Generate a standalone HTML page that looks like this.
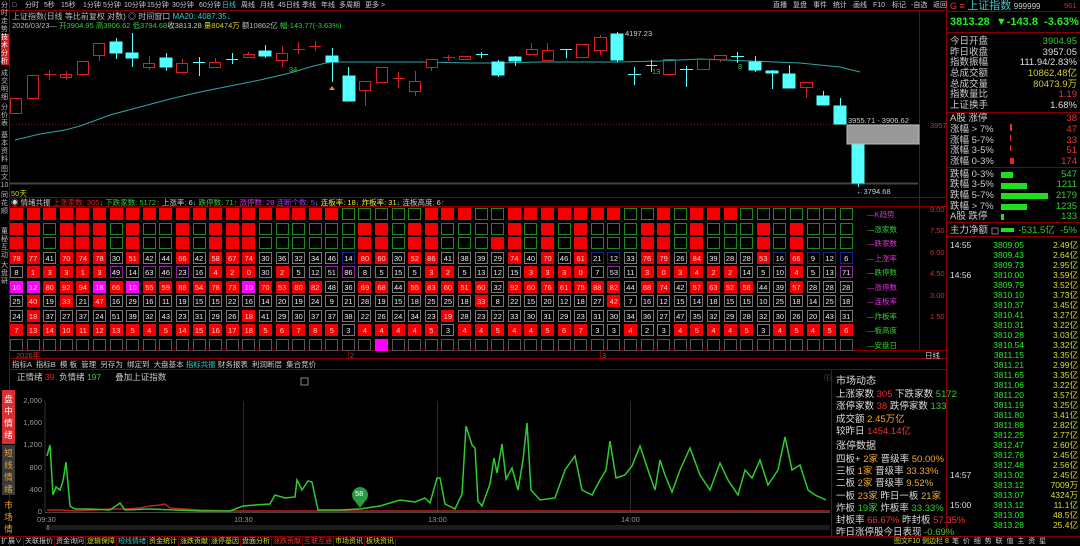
<!DOCTYPE html>
<html><head><meta charset="utf-8">
<style>
*{margin:0;padding:0;box-sizing:border-box}
body{width:1080px;height:546px;background:#000;overflow:hidden;position:relative;font-family:"Liberation Sans","Noto Sans CJK SC",sans-serif;font-size:9px;color:#ccc}
.a{position:absolute;white-space:nowrap;line-height:1}
svg{position:absolute;left:0;top:0}
.grid{position:absolute;left:10px;top:208px;display:grid;grid-template-columns:repeat(51,16.6px);grid-auto-rows:14.55px}
.grid b{display:block;width:13px;height:12px;font-weight:normal;font-size:7.5px;line-height:11px;text-align:center;color:#eee;border:1px solid #777}
.grid b.r{background:#f40000;border-color:#f40000;color:#fcc}
.grid b.g{border-color:#1c8a1c}
.grid b.p{background:#f0f;border-color:#f0f;color:#fdf}
.grid b.b{border-color:#23238a}
.grid b.v{border-color:#8a2a9a}
.grid b.e{border-color:#555}
.side{position:absolute;left:0;width:9px;font-size:7px;line-height:8px;text-align:center;color:#bbb}
.rp div{position:absolute;left:950px;right:3px;height:11px;font-size:9.5px;line-height:11px}
.rp span{float:right}
.mi{position:absolute;left:836px;font-size:9.5px;line-height:10px;color:#ddd;white-space:nowrap}
.bt{position:absolute;top:537px;height:9px;font-size:7px;line-height:9px;border-right:1px solid #700;padding:0 1px;white-space:nowrap}
.vt{position:absolute;left:2px;width:13px;font-size:8.5px;line-height:12px;text-align:center}
.tb span{position:absolute}
</style></head><body>

<svg width="1080" height="546">
<g stroke="#8a0000" fill="none" stroke-width="1">
<line x1="9.5" y1="0" x2="9.5" y2="546"/>
<line x1="0" y1="10.5" x2="946" y2="10.5"/>
<line x1="946.5" y1="0" x2="946.5" y2="537"/>
<line x1="10" y1="197.5" x2="946" y2="197.5"/>
<line x1="10" y1="206.5" x2="946" y2="206.5"/>
<line x1="919.5" y1="11" x2="919.5" y2="350"/>
<line x1="10" y1="350.5" x2="946" y2="350.5"/>
<line x1="10" y1="358.5" x2="946" y2="358.5"/>
<line x1="10" y1="369.5" x2="946" y2="369.5"/>
<line x1="831.5" y1="370" x2="831.5" y2="537"/>
<line x1="0" y1="536.5" x2="1080" y2="536.5"/>
<line x1="947" y1="11.5" x2="1080" y2="11.5"/>
<line x1="947" y1="32.5" x2="1080" y2="32.5"/>
<line x1="947" y1="112.5" x2="1080" y2="112.5"/>
<line x1="947" y1="167.5" x2="1080" y2="167.5"/>
<line x1="947" y1="222.5" x2="1080" y2="222.5"/>
<line x1="947" y1="236.5" x2="1080" y2="236.5"/>
<line x1="348.5" y1="351" x2="348.5" y2="358"/>
<line x1="600.5" y1="351" x2="600.5" y2="358"/>
</g>
<line x1="10" y1="124.5" x2="918" y2="124.5" stroke="#6a2020" stroke-dasharray="1,2"/>
<line x1="10" y1="183.5" x2="918" y2="183.5" stroke="#444" stroke-width="2"/>
<polyline fill="none" stroke="#2aa8a8" stroke-width="1" points="15,140 40,134 65,130 80,126 110,115 140,107 170,99 200,92 230,86 260,80 290,73 310,67 330,62 360,62 420,62 470,63 500,63 540,62 620,62 660,61 700,59 750,61 800,63 840,67 860,72"/>
<g stroke="#d82020" fill="none">
<rect x="10.5" y="98.5" width="11" height="15"/>
<rect x="27.5" y="75.5" width="11" height="23"/><line x1="33" y1="98" x2="33" y2="100"/>
<line x1="49.5" y1="70" x2="49.5" y2="80"/><line x1="44" y1="74.5" x2="56" y2="74.5"/>
<line x1="66.5" y1="71" x2="66.5" y2="80"/><rect x="60.5" y="74.5" width="11" height="3"/>
<rect x="77.5" y="61.5" width="11" height="13"/>
<line x1="99.5" y1="43" x2="99.5" y2="61"/><rect x="93.5" y="43.5" width="11" height="12" fill="#000"/>
<line x1="149.5" y1="56" x2="149.5" y2="70"/><rect x="143.5" y="63.5" width="11" height="4" fill="#000"/>
<line x1="182.5" y1="59" x2="182.5" y2="63"/><rect x="176.5" y="63.5" width="11" height="9" fill="#000"/>
<line x1="215.5" y1="58" x2="215.5" y2="68"/><rect x="209.5" y="62.5" width="11" height="5" fill="#000"/>
<line x1="248.5" y1="52" x2="248.5" y2="58"/><rect x="243.5" y="54.5" width="11" height="3" fill="#000"/>
<line x1="282.5" y1="46" x2="282.5" y2="67"/><rect x="276.5" y="53.5" width="11" height="7" fill="#000"/>
<line x1="298.5" y1="42" x2="298.5" y2="54"/><line x1="293" y1="49.5" x2="305" y2="49.5"/>
<line x1="315.5" y1="41" x2="315.5" y2="51"/><line x1="309" y1="46.5" x2="321" y2="46.5"/>
<line x1="365.5" y1="81" x2="365.5" y2="106"/><rect x="359.5" y="81.5" width="11" height="9" fill="#000"/>
<rect x="376.5" y="67.5" width="11" height="15"/>
<line x1="398.5" y1="72" x2="398.5" y2="88"/><line x1="393" y1="78.5" x2="405" y2="78.5"/>
<line x1="415.5" y1="71" x2="415.5" y2="96"/><rect x="409.5" y="81.5" width="11" height="10" fill="#000"/>
<line x1="431.5" y1="59" x2="431.5" y2="71"/><rect x="426.5" y="59.5" width="11" height="8" fill="#000"/>
<line x1="448.5" y1="55" x2="448.5" y2="61"/><line x1="443" y1="57.5" x2="455" y2="57.5"/>
<rect x="459.5" y="56.5" width="11" height="3"/>
<line x1="531.5" y1="43" x2="531.5" y2="55"/><rect x="526.5" y="49.5" width="11" height="5" fill="#000"/>
<line x1="547.5" y1="43" x2="547.5" y2="50"/><rect x="542.5" y="50.5" width="11" height="10" fill="#000"/>
<rect x="576.5" y="44.5" width="12" height="13"/>
<line x1="600.5" y1="35" x2="600.5" y2="55"/><rect x="594.5" y="37.5" width="12" height="13" fill="#000"/>
<rect x="663.5" y="59.5" width="12" height="15"/>
<rect x="697.5" y="59.5" width="12" height="10"/>
<line x1="720.5" y1="55" x2="720.5" y2="62"/><rect x="714.5" y="55.5" width="12" height="4" fill="#000"/>
<line x1="806.5" y1="82" x2="806.5" y2="98"/><rect x="800.5" y="82.5" width="12" height="5" fill="#000"/>
</g>
<g stroke="#5ff" fill="#5ff">
<line x1="116.5" y1="38" x2="116.5" y2="59"/><rect x="110" y="42" width="12" height="11"/>
<line x1="132.5" y1="33" x2="132.5" y2="67"/><rect x="126" y="53" width="12" height="5"/>
<line x1="166.5" y1="53" x2="166.5" y2="71"/><rect x="160" y="58" width="12" height="9"/>
<line x1="199.5" y1="57" x2="199.5" y2="76"/><line x1="193" y1="62.5" x2="205" y2="62.5"/>
<line x1="232.5" y1="53" x2="232.5" y2="64"/><line x1="226" y1="59.5" x2="238" y2="59.5"/>
<line x1="265.5" y1="45" x2="265.5" y2="58"/><rect x="259" y="51" width="12" height="5"/>
<line x1="332.5" y1="48" x2="332.5" y2="82"/><rect x="326" y="56" width="12" height="6"/>
<line x1="348.5" y1="67" x2="348.5" y2="101"/><rect x="343" y="76" width="12" height="25"/>
<line x1="481.5" y1="52" x2="481.5" y2="58"/><line x1="476" y1="54.5" x2="488" y2="54.5"/>
<line x1="498.5" y1="60" x2="498.5" y2="77"/><rect x="492" y="62" width="12" height="13"/>
<line x1="515.5" y1="56" x2="515.5" y2="66"/><rect x="509" y="57" width="12" height="4"/>
<line x1="566.5" y1="49" x2="566.5" y2="58"/><line x1="560" y1="49.5" x2="572" y2="49.5"/>
<line x1="617.5" y1="32" x2="617.5" y2="62"/><rect x="611" y="34" width="12" height="26"/>
<line x1="634.5" y1="67" x2="634.5" y2="85"/><line x1="628" y1="74.5" x2="641" y2="74.5"/>
<line x1="651.5" y1="60" x2="651.5" y2="72"/><line x1="646" y1="65.5" x2="657" y2="65.5"/>
<line x1="686.5" y1="66" x2="686.5" y2="87"/><line x1="680" y1="69.5" x2="693" y2="69.5"/>
<line x1="737.5" y1="52" x2="737.5" y2="63"/><line x1="731" y1="56.5" x2="744" y2="56.5"/>
<line x1="755.5" y1="56" x2="755.5" y2="72"/><rect x="749" y="62" width="12" height="8"/>
<line x1="772.5" y1="70" x2="772.5" y2="89"/><rect x="766" y="71" width="12" height="2"/>
<line x1="789.5" y1="65" x2="789.5" y2="88"/><rect x="783" y="74" width="12" height="14"/>
<line x1="823.5" y1="91" x2="823.5" y2="105"/><rect x="817" y="96" width="12" height="9"/>
<line x1="840.5" y1="98" x2="840.5" y2="124"/><rect x="834" y="106" width="12" height="18"/>
<line x1="858.5" y1="145" x2="858.5" y2="187"/><rect x="852" y="145" width="12" height="38"/>
</g>
<rect x="847" y="125" width="72" height="19" fill="#999" stroke="#bbb"/>
<path d="M329 90 l3 -4 l3 4z" fill="#e9823a"/>
<g stroke="#2a2a2a"><line x1="243.5" y1="401" x2="243.5" y2="512"/><line x1="437.5" y1="401" x2="437.5" y2="512"/><line x1="630.5" y1="401" x2="630.5" y2="512"/></g>
<line x1="45" y1="401" x2="45" y2="513" stroke="#333"/>
<line x1="45" y1="512.5" x2="830" y2="512.5" stroke="#444"/>
<polyline fill="none" stroke="#c02020" stroke-width="1.5" points="47,510 60,510 75,511 95,510 110,509 125,509 140,508 150,506 160,505 165,504 170,508 185,509 200,510 230,511 830,511"/>
<polyline fill="none" stroke="#2ecc2e" stroke-width="1.5" points="47,456 50,445 53,495 56,487 60,490 63,481 66,462 70,506 75,509 90,509 110,510 120,503 125,510 150,509 200,511 230,511 243,506 255,505 270,504 275,495 285,498 295,497 297,480 302,490 308,481 312,482 318,510 340,510 360,509 380,506 400,500 415,502 425,498 430,503 437,478 440,478 445,504 455,509 462,494 466,426 472,445 475,448 478,501 482,506 490,484 494,458 497,473 502,444 506,479 512,468 518,490 523,460 527,423 531,490 540,500 555,498 565,470 575,456 582,490 592,495 600,480 606,470 610,441 616,478 625,475 632,466 640,446 648,470 655,490 660,460 665,475 672,492 680,470 690,448 700,475 710,490 720,463 728,480 738,495 745,470 752,478 760,460 768,485 778,470 785,437 792,470 800,465 808,490 815,495 826,500"/>
<rect x="45" y="525" width="785" height="5" fill="#1c1c1c"/>
<rect x="47" y="525" width="2" height="5" fill="#555"/>
<path d="M360 503 a8 8 0 1 1 0.1 0 z" fill="#2a9a44"/>
<path d="M354 500 l6 8 l6 -8z" fill="#2a9a44"/>
<rect x="1010" y="124" width="2" height="7" fill="#d33"/><rect x="1010" y="135" width="1" height="6" fill="#d33"/><rect x="1010" y="145" width="1" height="6" fill="#d33"/><rect x="1010" y="158" width="4" height="6" fill="#e22"/>
<g fill="#1ee01e"><rect x="1001" y="172" width="12" height="6"/><rect x="1001" y="183" width="26" height="6"/><rect x="1001" y="193" width="47" height="6"/><rect x="1001" y="204" width="26" height="6"/><rect x="1001" y="214" width="3" height="6"/><rect x="1001" y="228" width="13" height="4"/></g>
<rect x="992" y="228" width="6" height="6" fill="none" stroke="#777"/>
<rect x="1" y="34" width="8" height="31" fill="#c81e1e"/>
<rect x="2" y="390" width="13" height="54" fill="#d83030"/>
<rect x="2" y="445" width="13" height="50" fill="#3a3a3a"/>
<rect x="301" y="378" width="7" height="7" fill="none" stroke="#888"/>
</svg>

<div class="a tb" style="left:12px;top:2px;font-size:7px;color:#ccc">
<span style="left:0">□</span><span style="left:13px">分时</span><span style="left:32px">5秒</span><span style="left:49px">15秒</span><span style="left:71px">1分钟</span><span style="left:91px">5分钟</span><span style="left:112px">10分钟</span><span style="left:135px">15分钟</span><span style="left:160px">30分钟</span><span style="left:187px">60分钟</span><span style="left:210px;color:#3cc">日线</span><span style="left:229px">周线</span><span style="left:248px">月线</span><span style="left:266px">45日线</span><span style="left:290px">季线</span><span style="left:309px">年线</span><span style="left:327px">多周期</span><span style="left:353px">更多 &gt;</span>
</div>
<div class="a tb" style="left:773px;top:2px;font-size:7px;color:#ccc"><span style="left:0">直播</span><span style="left:20px">复盘</span><span style="left:40px">事件</span><span style="left:60px">统计</span><span style="left:80px">画线</span><span style="left:100px">F10</span><span style="left:119px">标记</span><span style="left:138px">-自选</span><span style="left:160px">返回</span></div>

<div class="a" style="left:12px;top:13px;font-size:8px;color:#bbb">上证指数(日线 等比前复权 对数) ◎ 时间窗口 <span style="color:#3cc">MA20: 4087.35↓</span></div>
<div class="a" style="left:12px;top:22px;font-size:7.5px;color:#bbb">2026/03/23— <span style="color:#3c3">开3904.95</span> <span style="color:#3c3">高3906.62</span> <span style="color:#3c3">低3794.68</span><span style="color:#ccc">收3813.28</span> <span style="color:#cc3">量80474万</span> <span style="color:#bbb">额10862亿</span> <span style="color:#3c3">幅-143.77(-3.63%)</span></div>
<div class="a" style="left:625px;top:30px;font-size:7.5px;color:#ccc">4197.23</div>
<div class="a" style="left:289px;top:66px;font-size:7.5px;color:#3c3">34</div>
<div class="a" style="left:652px;top:68px;font-size:7.5px;color:#3c3">13</div>
<div class="a" style="left:738px;top:63px;font-size:7.5px;color:#3c3">8</div>
<div class="a" style="left:848px;top:117px;font-size:7.5px;color:#ccc">3955.71 - 3906.62</div>
<div class="a" style="left:856px;top:188px;font-size:7.5px;color:#ccc">←3794.68</div>
<div class="a" style="left:930px;top:122px;font-size:7.5px;color:#c33">3957</div>
<div class="a" style="left:11px;top:190px;font-size:7.5px;color:#cc3">50天</div>
<div class="a" style="left:11px;top:199px;font-size:7.5px;color:#ccc">◉ 情绪共振 <span style="color:#d22">上涨家数: 305</span><span style="color:#3cf">↓</span> <span style="color:#3c3">下跌家数: 5172</span><span style="color:#f33">↑</span> <span style="color:#ccc">上涨率: 6</span><span style="color:#3cf">↓</span> <span style="color:#3c3">跌停数: 71</span><span style="color:#f33">↑</span> <span style="color:#d3d">涨停数: 28</span> <span style="color:#a3f">连断个数: 5</span><span style="color:#3cf">↓</span> <span style="color:#ee3">连板率: 18</span><span style="color:#3cf">↓</span> <span style="color:#ee3">炸板率: 31</span><span style="color:#3cf">↓</span> <span style="color:#ccc">连板高度: 6</span><span style="color:#f33">↑</span></div>

<div class="side" style="top:2px">分<br>时<br>走<br>势</div>
<div class="side" style="top:34px;color:#fff">技<br>术<br>分<br>析</div>
<div class="side" style="top:70px">成<br>交<br>明<br>细</div>
<div class="side" style="top:104px">分<br>价<br>表</div>
<div class="side" style="top:132px">基<br>本<br>资<br>料</div>
<div class="side" style="top:166px">图<br>文<br>10</div>
<div class="side" style="top:192px">同<br>花<br>顺</div>
<div class="side" style="top:228px">董<br>秘<br>互<br>动</div>
<div class="side" style="top:262px">大<br>盘<br>研</div>

<div class="grid">
<b class=r></b><b class=r></b><b class=r></b><b class=r></b><b class=r></b><b class=r></b><b class=r></b><b class=r></b><b class=r></b><b class=r></b><b class=r></b><b class=r></b><b class=r></b><b class=r></b><b class=r></b><b class=r></b><b class=r></b><b class=r></b><b class=r></b><b class=r></b><b class=g></b><b class=g></b><b class=g></b><b class=g></b><b class=g></b><b class=r></b><b class=r></b><b class=r></b><b class=g></b><b class=g></b><b class=r></b><b class=r></b><b class=r></b><b class=r></b><b class=r></b><b class=r></b><b class=r></b><b class=g></b><b class=g></b><b class=r></b><b class=g></b><b class=r></b><b class=r></b><b class=r></b><b class=g></b><b class=g></b><b class=g></b><b class=g></b><b class=g></b><b class=g></b><b class=g></b>
<b class=r></b><b class=r></b><b class=g></b><b class=r></b><b class=r></b><b class=r></b><b class=g></b><b class=r></b><b class=g></b><b class=g></b><b class=r></b><b class=g></b><b class=r></b><b class=r></b><b class=r></b><b class=g></b><b class=g></b><b class=g></b><b class=g></b><b class=g></b><b class=g></b><b class=r></b><b class=r></b><b class=g></b><b class=r></b><b class=r></b><b class=g></b><b class=g></b><b class=g></b><b class=g></b><b class=r></b><b class=g></b><b class=r></b><b class=g></b><b class=r></b><b class=g></b><b class=g></b><b class=g></b><b class=r></b><b class=r></b><b class=g></b><b class=r></b><b class=g></b><b class=g></b><b class=g></b><b class=r></b><b class=g></b><b class=r></b><b class=g></b><b class=g></b><b class=g></b>
<b class=r></b><b class=r></b><b class=g></b><b class=r></b><b class=r></b><b class=r></b><b class=g></b><b class=r></b><b class=g></b><b class=g></b><b class=r></b><b class=g></b><b class=r></b><b class=r></b><b class=r></b><b class=g></b><b class=g></b><b class=g></b><b class=g></b><b class=g></b><b class=g></b><b class=r></b><b class=r></b><b class=g></b><b class=r></b><b class=r></b><b class=g></b><b class=g></b><b class=g></b><b class=r></b><b class=r></b><b class=g></b><b class=r></b><b class=g></b><b class=r></b><b class=g></b><b class=g></b><b class=g></b><b class=r></b><b class=r></b><b class=g></b><b class=r></b><b class=g></b><b class=g></b><b class=g></b><b class=r></b><b class=g></b><b class=r></b><b class=g></b><b class=g></b><b class=g></b>
<b class=r>78</b><b class=r>77</b><b>41</b><b class=r>70</b><b class=r>74</b><b class=r>78</b><b>30</b><b class=r>51</b><b>42</b><b>44</b><b class=r>66</b><b>42</b><b class=r>58</b><b class=r>67</b><b class=r>74</b><b>30</b><b>36</b><b>32</b><b>34</b><b>46</b><b class=b>14</b><b class=r>80</b><b class=r>60</b><b>30</b><b class=r>52</b><b class=r>86</b><b>41</b><b>38</b><b>39</b><b>29</b><b class=r>74</b><b>40</b><b class=r>70</b><b>46</b><b class=r>61</b><b class=b>21</b><b class=b>12</b><b>33</b><b class=r>76</b><b class=r>79</b><b>26</b><b class=r>84</b><b>39</b><b>28</b><b>28</b><b class=r>53</b><b class=b>16</b><b class=r>66</b><b class=b>9</b><b class=b>12</b><b class=b>6</b>
<b>8</b><b class=r>1</b><b class=r>3</b><b class=r>3</b><b class=r>1</b><b class=r>3</b><b class=v>49</b><b>14</b><b class=v>63</b><b class=v>46</b><b class=v>23</b><b>16</b><b class=r>4</b><b class=r>2</b><b class=r>0</b><b>30</b><b class=r>2</b><b>5</b><b>12</b><b class=v>51</b><b class=v>86</b><b>8</b><b>5</b><b>15</b><b>5</b><b class=r>3</b><b class=r>2</b><b>5</b><b>13</b><b>12</b><b>15</b><b class=r>3</b><b class=r>3</b><b class=r>3</b><b class=r>0</b><b>7</b><b class=v>53</b><b>11</b><b class=r>3</b><b class=r>0</b><b class=r>3</b><b class=r>4</b><b class=r>2</b><b class=r>2</b><b>14</b><b>5</b><b>10</b><b class=r>4</b><b>5</b><b>13</b><b class=v>71</b>
<b class=p>10</b><b class=p>12</b><b class=r>80</b><b class=r>92</b><b class=r>94</b><b class=p>18</b><b class=r>66</b><b class=p>10</b><b class=r>55</b><b class=r>59</b><b class=r>88</b><b class=r>54</b><b class=r>78</b><b class=r>73</b><b class=p>10</b><b class=r>70</b><b class=r>53</b><b class=r>80</b><b class=r>82</b><b>48</b><b>36</b><b class=r>69</b><b class=r>68</b><b>44</b><b class=r>55</b><b class=r>83</b><b class=r>60</b><b class=r>51</b><b class=r>60</b><b>32</b><b class=r>92</b><b class=r>60</b><b class=r>76</b><b class=r>61</b><b class=r>75</b><b class=r>88</b><b class=r>82</b><b>44</b><b class=r>68</b><b class=r>74</b><b>42</b><b class=r>57</b><b class=r>63</b><b class=r>52</b><b class=r>58</b><b>44</b><b>39</b><b class=r>57</b><b>28</b><b>28</b><b>28</b>
<b>25</b><b class=r>40</b><b>19</b><b class=r>33</b><b>21</b><b class=r>47</b><b>16</b><b>29</b><b>16</b><b>11</b><b>19</b><b>15</b><b>15</b><b>22</b><b>16</b><b>14</b><b>20</b><b>19</b><b>24</b><b>9</b><b>21</b><b>28</b><b>19</b><b>15</b><b>18</b><b>25</b><b>25</b><b>18</b><b class=r>33</b><b>8</b><b>22</b><b>15</b><b>20</b><b>12</b><b>18</b><b>27</b><b class=r>42</b><b>7</b><b>16</b><b>12</b><b>15</b><b>14</b><b>18</b><b>15</b><b>15</b><b>10</b><b>25</b><b>18</b><b>14</b><b>25</b><b>18</b>
<b>24</b><b class=r>18</b><b>37</b><b>27</b><b>37</b><b>24</b><b>51</b><b>39</b><b>32</b><b>43</b><b>23</b><b>31</b><b>29</b><b>26</b><b class=r>18</b><b>41</b><b>29</b><b>30</b><b>37</b><b>37</b><b>38</b><b>22</b><b>26</b><b>24</b><b>34</b><b>23</b><b class=r>19</b><b>28</b><b>23</b><b>22</b><b>33</b><b>30</b><b>31</b><b>29</b><b>23</b><b>31</b><b>30</b><b>34</b><b>36</b><b>27</b><b>47</b><b>35</b><b>32</b><b>29</b><b>28</b><b>32</b><b>30</b><b>26</b><b>20</b><b>43</b><b>31</b>
<b class=r>7</b><b class=r>13</b><b class=r>14</b><b class=r>10</b><b class=r>11</b><b class=r>12</b><b class=r>13</b><b class=r>5</b><b class=r>4</b><b class=r>5</b><b class=r>14</b><b class=r>15</b><b class=r>16</b><b class=r>17</b><b class=r>18</b><b class=r>5</b><b class=r>6</b><b class=r>7</b><b class=r>8</b><b class=r>5</b><b>3</b><b class=r>4</b><b class=r>4</b><b class=r>4</b><b class=r>4</b><b class=r>5</b><b>3</b><b class=r>4</b><b class=r>4</b><b class=r>5</b><b class=r>4</b><b class=r>4</b><b class=r>5</b><b class=r>6</b><b class=r>7</b><b>3</b><b>3</b><b class=r>4</b><b>2</b><b>3</b><b class=r>4</b><b class=r>5</b><b class=r>4</b><b class=r>4</b><b class=r>5</b><b>3</b><b class=r>4</b><b class=r>5</b><b class=r>4</b><b class=r>5</b><b class=r>6</b>
<b class=e></b><b class=e></b><b class=e></b><b class=e></b><b class=e></b><b class=e></b><b class=e></b><b class=e></b><b class=e></b><b class=e></b><b class=e></b><b class=e></b><b class=e></b><b class=e></b><b class=e></b><b class=e></b><b class=e></b><b class=e></b><b class=e></b><b class=e></b><b class=e></b><b class=e></b><b class=p></b><b class=e></b><b class=e></b><b class=e></b><b class=e></b><b class=e></b><b class=e></b><b class=e></b><b class=e></b><b class=e></b><b class=e></b><b class=e></b><b class=e></b><b class=e></b><b class=e></b><b class=e></b><b class=e></b><b class=e></b><b class=e></b><b class=e></b><b class=e></b><b class=e></b><b class=e></b><b class=e></b><b class=e></b><b class=e></b><b class=e></b><b class=e></b><b class=e></b>
</div>

<div class="a" style="left:867px;top:208px;font-size:7.5px;line-height:14.55px;white-space:normal;width:50px">
<div style="color:#d3d">—K趋势</div><div style="color:#3c3">—涨家数</div><div style="color:#d3d">—跌家数</div><div style="color:#d3d">—上涨率</div><div style="color:#3c3">—跌停数</div><div style="color:#d3d">—涨停数</div><div style="color:#d3d">—连板率</div><div style="color:#3c3">—炸板率</div><div style="color:#3c3">—板高度</div><div style="color:#3c3">—安盘日</div>
</div>
<div class="a" style="left:930px;top:199px;font-size:7.5px;line-height:21.4px;color:#c33;white-space:normal"><div>9.00</div><div>7.50</div><div>6.00</div><div>4.50</div><div>3.00</div><div>1.50</div></div>
<div class="a" style="left:16px;top:352px;font-size:7.5px;color:#c33">2026年</div>
<div class="a" style="left:350px;top:352px;font-size:7.5px;color:#c33">2</div>
<div class="a" style="left:602px;top:352px;font-size:7.5px;color:#c33">3</div>
<div class="a" style="left:925px;top:352px;font-size:7.5px;color:#ccc">日线</div>
<div class="a" style="left:12px;top:361px;font-size:7.5px;color:#ccc">指标A &nbsp;指标B &nbsp;模 板 &nbsp;管理 &nbsp;另存为 &nbsp;绑定到 &nbsp;大盘基本 <span style="color:#3cc">指标共振</span> 财务报表 &nbsp;利润断层 &nbsp;集合竞价</div>

<div class="a" style="left:17px;top:373px;font-size:8.5px;color:#ccc">正情绪 <span style="color:#d22">39</span> &nbsp;负情绪 <span style="color:#3c3">197</span> &nbsp; &nbsp;&nbsp; 叠加上证指数</div>
<div class="vt" style="top:393px;color:#fff">盘<br>中<br>情<br>绪</div>
<div class="vt" style="top:447px;color:#e9a030">短<br>线<br>情<br>绪</div>
<div class="vt" style="top:499px;color:#e9a030">市<br>场<br>情</div>
<div class="a" style="left:18px;top:390px;font-size:7.5px;line-height:22.2px;color:#999;white-space:normal;text-align:right;width:24px"><div>2,000</div><div>1,600</div><div>1,200</div><div>800</div><div>400</div><div>0</div></div>
<div class="a" style="top:516px;left:37px;font-size:7.5px;color:#999">09:30</div>
<div class="a" style="top:516px;left:234px;font-size:7.5px;color:#999">10:30</div>
<div class="a" style="top:516px;left:428px;font-size:7.5px;color:#999">13:00</div>
<div class="a" style="top:516px;left:621px;font-size:7.5px;color:#999">14:00</div>
<div class="a" style="top:490px;left:355px;font-size:7.5px;color:#fff">58</div>
<div class="a" style="top:375px;left:824px;font-size:7px;color:#888">ⓘ</div>

<div class="mi" style="top:377px;font-size:10px">市场动态</div>
<div class="mi" style="top:390px">上涨家数 <span style="color:#e33">305</span> 下跌家数 <span style="color:#3c3">5172</span></div>
<div class="mi" style="top:402px">涨停家数 <span style="color:#e33">38</span> 跌停家数 <span style="color:#3c3">133</span></div>
<div class="mi" style="top:415px">成交额 <span style="color:#ea3">2.45万亿</span></div>
<div class="mi" style="top:427px">较昨日 <span style="color:#e33">1454.14亿</span></div>
<div class="mi" style="top:442px;font-size:10px">涨停数据</div>
<div class="mi" style="top:455px">四板+ <span style="color:#ea3">2家</span> 晋级率 <span style="color:#ea3">50.00%</span></div>
<div class="mi" style="top:467px">三板 <span style="color:#ea3">1家</span> 晋级率 <span style="color:#ea3">33.33%</span></div>
<div class="mi" style="top:479px">二板 <span style="color:#ea3">2家</span> 晋级率 <span style="color:#ea3">9.52%</span></div>
<div class="mi" style="top:492px">一板 <span style="color:#ea3">23家</span> 昨日一板 <span style="color:#ea3">21家</span></div>
<div class="mi" style="top:504px">炸板 <span style="color:#3c3">19家</span> 炸板率 <span style="color:#3c3">33.33%</span></div>
<div class="mi" style="top:516px">封板率 <span style="color:#e33">66.67%</span> 昨封板 <span style="color:#e33">57.35%</span></div>
<div class="mi" style="top:528px">昨日涨停股今日表现 <span style="color:#3c3">-0.69%</span></div>

<div class="a" style="left:950px;top:1px;font-size:9px;color:#e33">G ≡ <span style="color:#3cc;font-size:11px">上证指数</span> <span style="color:#ccc;font-size:8px">999999</span></div>
<div class="a" style="left:1064px;top:2px;font-size:7.5px;color:#c33">961</div>
<div class="a" style="left:950px;top:17px;font-size:11px;font-weight:bold;color:#2e2">3813.28 &nbsp;▼-143.8 &nbsp;-3.63%</div>
<div class="rp">
<div style="top:36px">今日开盘<span style="color:#3c3">3904.95</span></div>
<div style="top:47px">昨日收盘<span style="color:#ddd">3957.05</span></div>
<div style="top:57px">指数振幅<span style="color:#ddd">111.94/2.83%</span></div>
<div style="top:68px">总成交额<span style="color:#cc3">10862.48亿</span></div>
<div style="top:79px">总成交量<span style="color:#cc3">80473.9万</span></div>
<div style="top:89px">指数量比<span style="color:#e33">1.19</span></div>
<div style="top:100px">上证换手<span style="color:#ddd">1.68%</span></div>
<div style="top:113px">A股 涨停<span style="color:#e33">38</span></div>
<div style="top:124px">涨幅 &gt; 7%<span style="color:#e33">47</span></div>
<div style="top:135px">涨幅 5-7%<span style="color:#e33">33</span></div>
<div style="top:145px">涨幅 3-5%<span style="color:#e33">51</span></div>
<div style="top:156px">涨幅 0-3%<span style="color:#e33">174</span></div>
<div style="top:169px">跌幅 0-3%<span style="color:#3c3">547</span></div>
<div style="top:179px">跌幅 3-5%<span style="color:#3c3">1211</span></div>
<div style="top:190px">跌幅 5-7%<span style="color:#3c3">2179</span></div>
<div style="top:201px">跌幅 &gt; 7%<span style="color:#3c3">1235</span></div>
<div style="top:211px">A股 跌停<span style="color:#3c3">133</span></div>
<div style="top:225px">主力净额<span style="color:#3c3">-531.5亿 &nbsp;-5%</span></div>
</div>

<div class="a" style="left:950px;top:240px;font-size:8.5px;line-height:10px;color:#ddd;white-space:normal"><div>14:55</div><div>&nbsp;</div><div>&nbsp;</div><div>14:56</div><div style="height:190px"></div><div>14:57</div><div>&nbsp;</div><div>&nbsp;</div><div>15:00</div></div>
<div class="a" style="left:990px;top:240px;font-size:8.5px;line-height:10px;color:#2e2;white-space:normal;width:34px;text-align:right"><div>3809.05</div><div>3809.43</div><div>3809.73</div><div>3810.00</div><div>3809.79</div><div>3810.10</div><div>3810.37</div><div>3810.41</div><div>3810.31</div><div>3810.28</div><div>3810.54</div><div>3811.15</div><div>3811.21</div><div>3811.65</div><div>3811.06</div><div>3811.20</div><div>3811.19</div><div>3811.80</div><div>3811.88</div><div>3812.25</div><div>3812.47</div><div>3812.76</div><div>3812.48</div><div>3813.02</div><div>3813.12</div><div>3813.07</div><div>3813.12</div><div>3813.03</div><div>3813.28</div></div>
<div class="a" style="left:1030px;top:240px;font-size:8.5px;line-height:10px;color:#dd3;white-space:normal;width:48px;text-align:right"><div>2.49亿</div><div>2.64亿</div><div>2.95亿</div><div>3.59亿</div><div>3.52亿</div><div>3.73亿</div><div>3.45亿</div><div>3.27亿</div><div>3.22亿</div><div>3.03亿</div><div>3.32亿</div><div>3.35亿</div><div>2.99亿</div><div>3.35亿</div><div>3.22亿</div><div>3.57亿</div><div>3.25亿</div><div>3.41亿</div><div>2.82亿</div><div>2.77亿</div><div>2.60亿</div><div>2.45亿</div><div>2.56亿</div><div>2.45亿</div><div>7009万</div><div>4324万</div><div>11.1亿</div><div>48.5亿</div><div>25.4亿</div></div>

<div class="bt" style="left:0;color:#ccc">扩展∨</div>
<div class="bt" style="left:24px;color:#ccc">关联报价</div>
<div class="bt" style="left:55px;color:#ccc">资金询问</div>
<div class="bt" style="left:86px;color:#dd3">逻辑保障</div>
<div class="bt" style="left:117px;color:#3cc">短线情绪</div>
<div class="bt" style="left:148px;color:#dd3">资金统计</div>
<div class="bt" style="left:179px;color:#dd3">涨跌贡献</div>
<div class="bt" style="left:210px;color:#dd3">涨停基因</div>
<div class="bt" style="left:241px;color:#dd3">盘面分析</div>
<div class="bt" style="left:272px;color:#e33">涨跌贡献</div>
<div class="bt" style="left:303px;color:#e33">互联互通</div>
<div class="bt" style="left:334px;color:#dd3">市场资讯</div>
<div class="bt" style="left:365px;color:#dd3">板块资讯</div>
<div class="bt" style="left:893px;color:#dd3;border:none">图文F10 侧边栏 8</div>
<div class="a" style="left:952px;top:538px;font-size:7px;color:#ccc">笔 &nbsp;价 &nbsp;细 &nbsp;势 &nbsp;联 &nbsp;值 &nbsp;主 &nbsp;资 &nbsp;星</div>
</body></html>
